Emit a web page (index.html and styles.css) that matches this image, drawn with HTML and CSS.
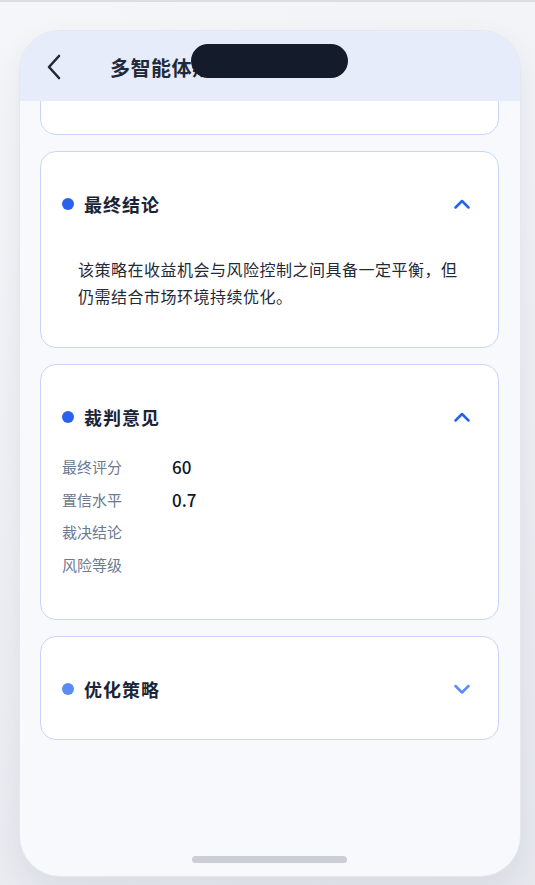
FILE: index.html
```html
<!DOCTYPE html>
<html lang="zh-CN">
<head>
  <meta charset="UTF-8" />
  <meta name="viewport" content="width=device-width, initial-scale=1.0"/>
  <title>多智能体辩论</title>
  <link rel="stylesheet" href="styles.css">
</head>
<body>
  <div class="phone">
    <div class="island"></div>

    <div class="topbar">
      <button class="back" aria-label="返回">
        <svg width="16" height="26" viewBox="0 0 16 26">
          <path d="M13 2 L3 13 L13 24" fill="none" stroke="#1e293b" stroke-width="2.6" stroke-linecap="round" stroke-linejoin="round"/>
        </svg>
      </button>
      <h1 class="page-title">多智能体辩论</h1>
    </div>

    <div class="content">
      <!-- scrolled past: only the bottom of this card shows -->
      <div class="card card-cut"></div>

      <div class="card open">
        <div class="card-head">
          <span class="dot"></span>
          <h2 class="card-title">最终结论</h2>
          <svg class="chev" width="16" height="10" viewBox="0 0 16 10">
            <path d="M1.5 8.5 L8 2 L14.5 8.5" fill="none" stroke="currentColor" stroke-width="2.5" stroke-linecap="round" stroke-linejoin="round"/>
          </svg>
        </div>
        <div class="card-body">
          <p class="summary">该策略在收益机会与风险控制之间具备一定平衡，但仍需结合市场环境持续优化。</p>
        </div>
      </div>

      <div class="card open">
        <div class="card-head">
          <span class="dot"></span>
          <h2 class="card-title">裁判意见</h2>
          <svg class="chev" width="16" height="10" viewBox="0 0 16 10">
            <path d="M1.5 8.5 L8 2 L14.5 8.5" fill="none" stroke="currentColor" stroke-width="2.5" stroke-linecap="round" stroke-linejoin="round"/>
          </svg>
        </div>
        <div class="card-body">
          <dl class="facts">
            <div class="fact"><dt>最终评分</dt><dd>60</dd></div>
            <div class="fact"><dt>置信水平</dt><dd>0.7</dd></div>
            <div class="fact"><dt>裁决结论</dt><dd></dd></div>
            <div class="fact"><dt>风险等级</dt><dd></dd></div>
          </dl>
        </div>
      </div>

      <div class="card closed">
        <div class="card-head">
          <span class="dot"></span>
          <h2 class="card-title">优化策略</h2>
          <svg class="chev" width="16" height="10" viewBox="0 0 16 10">
            <path d="M1.5 2 L8 8.5 L14.5 2" fill="none" stroke="currentColor" stroke-width="2.5" stroke-linecap="round" stroke-linejoin="round"/>
          </svg>
        </div>
      </div>
    </div>

    <div class="home-bar"></div>
  </div>
</body>
</html>
```

FILE: styles.css
```css
* {
  box-sizing: border-box;
}

body {
  margin: 0;
  height: 885px;
  overflow: hidden;
  border-top: 2px solid #dcdde2;
  background: linear-gradient(160deg, #f5f6f9, #eceef3 60%, #e6e8ee);
  font-family: "Noto Sans CJK SC", "Noto Sans", sans-serif;
  color: #1a2436;
}

.phone {
  position: relative;
  width: 500px;
  height: 845px;
  margin: 29px 0 0 20px;
  border-radius: 40px;
  background: #f7f9fd;
  box-shadow: 0 0 0 1px #e4e7ef, 0 12px 30px rgba(40, 50, 90, 0.08);
  overflow: hidden;
  display: flex;
  flex-direction: column;
}

.island {
  position: absolute;
  top: 13px;
  left: 171px;
  width: 157px;
  height: 34px;
  border-radius: 17px;
  background: #141b2a;
  z-index: 3;
}

.topbar {
  flex: none;
  height: 70px;
  display: flex;
  align-items: center;
  padding: 2px 0 0 26px;
  background: #e6ecfa;
  position: relative;
  z-index: 2;
}

.back {
  border: none;
  background: none;
  padding: 0;
  width: 20px;
  height: 26px;
  display: flex;
  align-items: center;
  cursor: pointer;
}

.page-title {
  margin: 0 0 0 44px;
  font-size: 20px;
  font-weight: 700;
  color: #1e293b;
  letter-spacing: 0.5px;
}

.content {
  flex: 1;
  padding: 0 21px 0 20px;
  overflow: hidden;
}

.card {
  background: #fff;
  border: 1px solid #c8d5f6;
  border-radius: 16px;
  padding: 0 21px;
  margin-bottom: 16px;
}

.card-cut {
  height: 80px;
  margin-top: -46px;
}

.card-head {
  display: flex;
  align-items: center;
  padding: 38px 0 36px;
}

.open .card-head {
  padding-bottom: 0;
}

.dot {
  width: 12px;
  height: 12px;
  border-radius: 50%;
  background: #2a62ee;
  margin-right: 10px;
}

.closed .dot {
  background: #5b8cf6;
}

.card-title {
  margin: 0;
  flex: 1;
  font-size: 18px;
  line-height: 28px;
  font-weight: 700;
  letter-spacing: 1px;
  color: #1a2436;
}

.chev {
  color: #2563eb;
  margin-right: 7px;
}

.closed .chev {
  color: #5b8cf6;
}

.card-body {
  padding-bottom: 37px;
}

.summary {
  margin: 38px 0 0;
  padding: 0 14px 0 16px;
  font-size: 16px;
  line-height: 27px;
  letter-spacing: 0.5px;
  color: #1f2937;
}

.facts {
  margin: 19px 0 1px;
}

.fact {
  display: flex;
  align-items: center;
  height: 32.7px;
}

.fact dt {
  width: 110px;
  font-size: 15px;
  color: #6b7a90;
}

.fact dd {
  margin: 0;
  font-size: 17px;
  font-weight: 500;
  color: #0f172a;
}

.home-bar {
  position: absolute;
  left: 172px;
  bottom: 13px;
  width: 155px;
  height: 7px;
  border-radius: 4px;
  background: #cbced6;
}
```
